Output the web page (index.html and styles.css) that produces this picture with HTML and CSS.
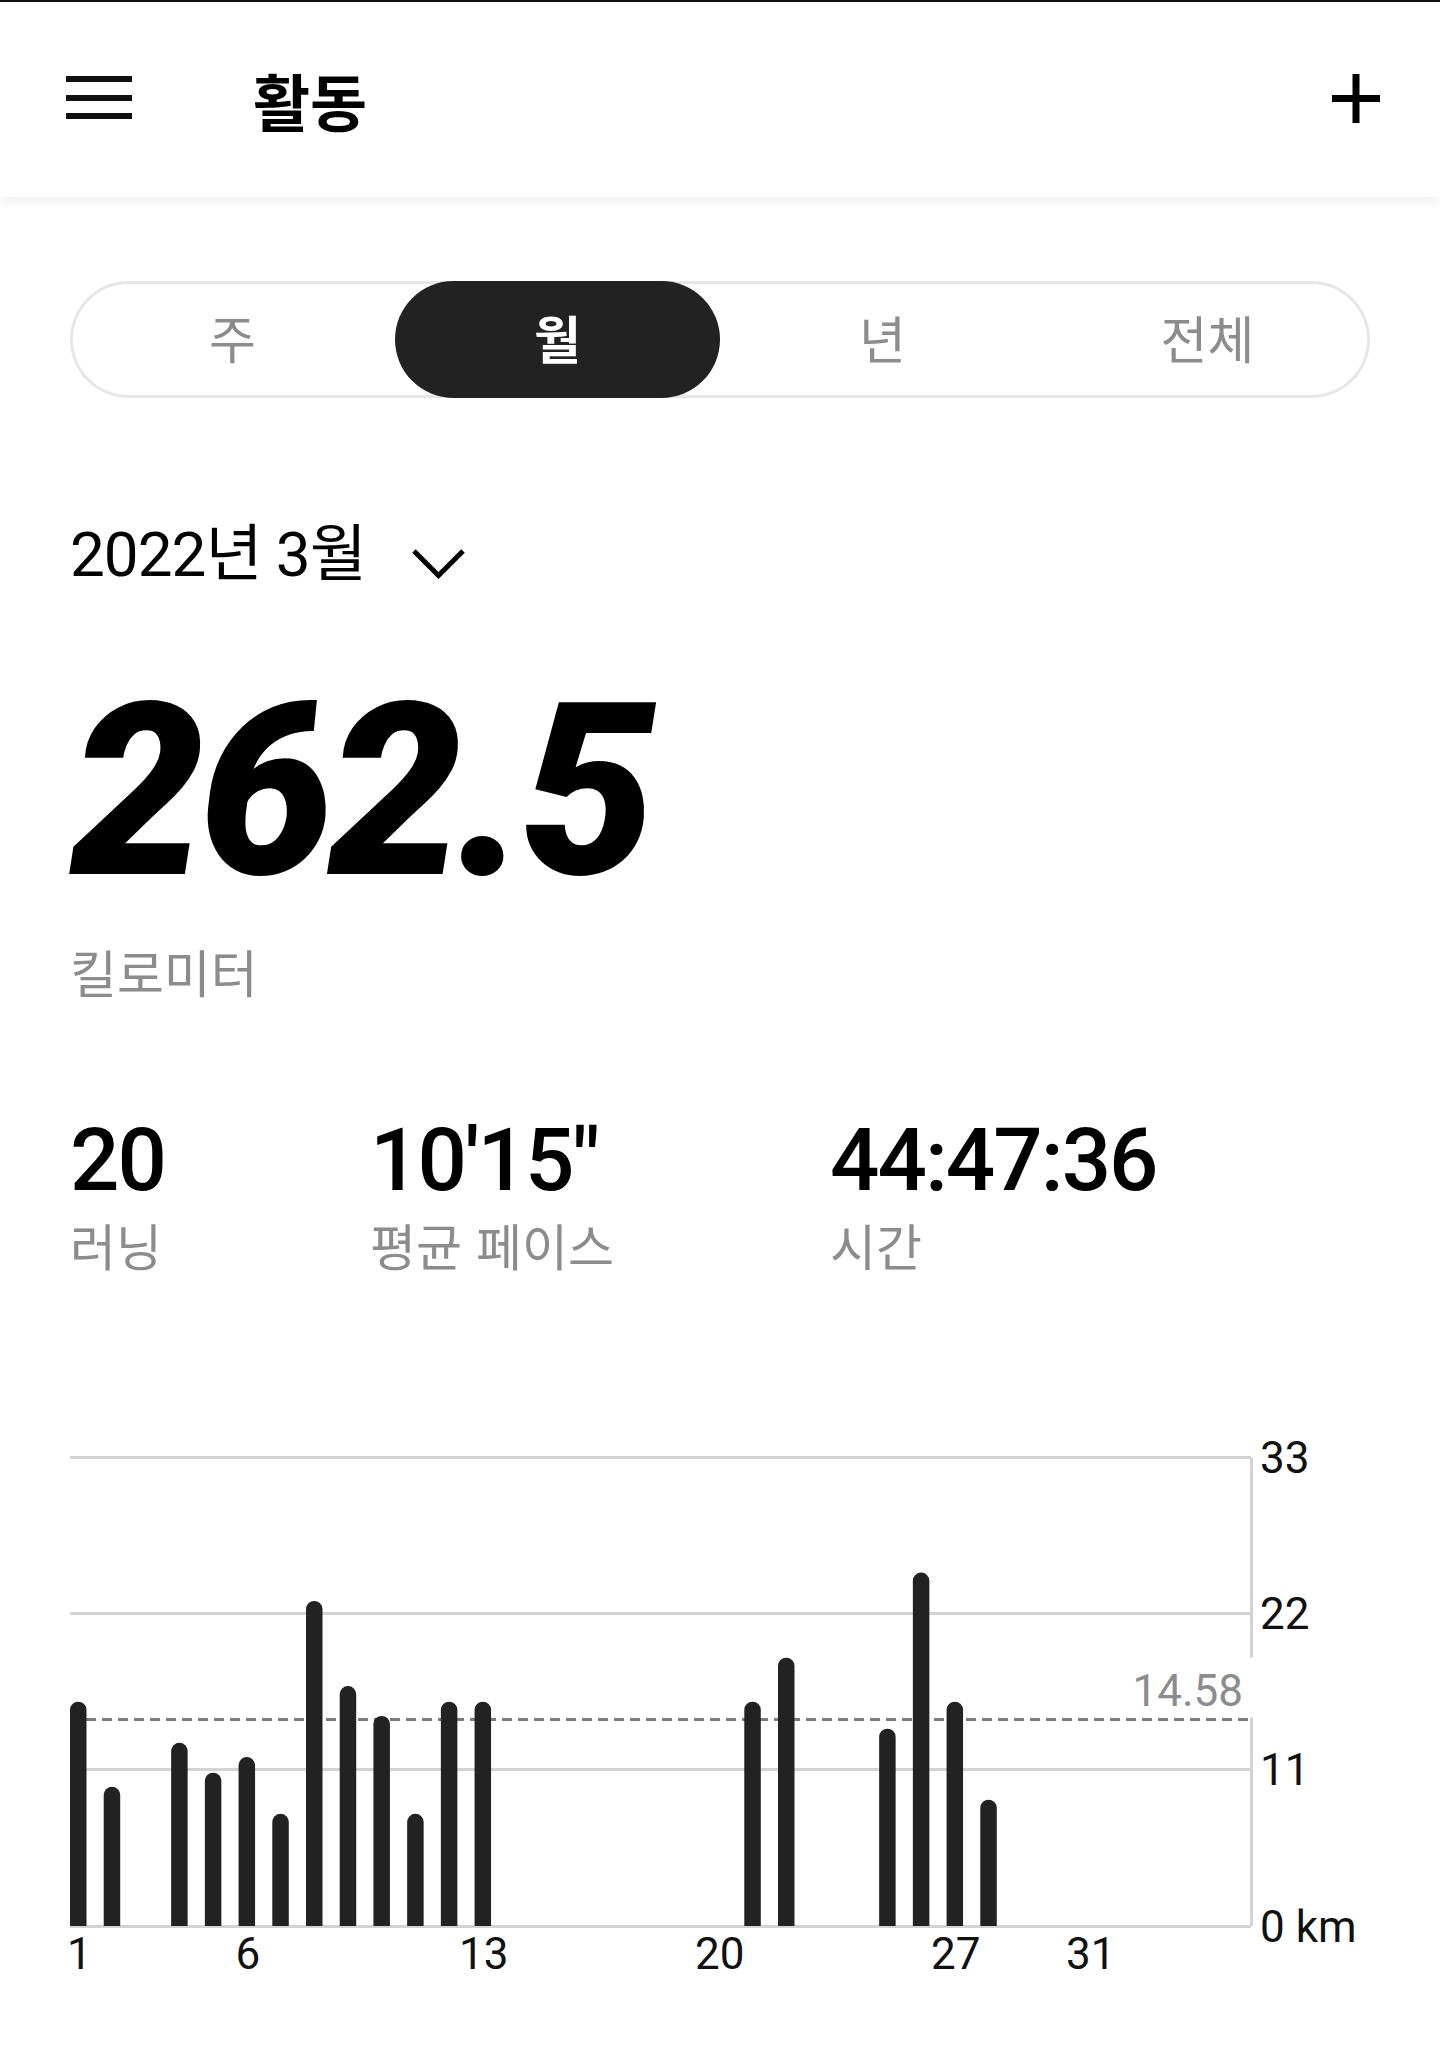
FILE: index.html
```html
<!DOCTYPE html>
<html lang="ko">
<head>
  <meta charset="UTF-8">
  <meta name="viewport" content="width=device-width, initial-scale=1.0">
  <title>활동</title>
  <link rel="stylesheet" href="styles.css">
</head>
<body>
  <header class="topbar">
    <button class="menu" type="button" aria-label="메뉴">
      <span></span><span></span><span></span>
    </button>
    <h1 class="title">활동</h1>
    <button class="add" type="button" aria-label="추가">
      <svg width="48" height="49" viewBox="0 0 48 49">
        <path d="M24 0V49M0 24.5H48" stroke="#000" stroke-width="7" fill="none"/>
      </svg>
    </button>
  </header>

  <main class="content">
    <div class="tabs">
      <div class="tab">주</div>
      <div class="tab active">월</div>
      <div class="tab">년</div>
      <div class="tab">전체</div>
    </div>

    <div class="period">
      <span>2022년 3월</span>
      <svg class="chevron" width="53" height="32" viewBox="0 0 53 32">
        <path d="M2 4L26.5 28.5L51 4" stroke="#000" stroke-width="5" fill="none"/>
      </svg>
    </div>

    <div class="total">262.5</div>
    <div class="unit">킬로미터</div>

    <div class="stats">
      <div class="stat">
        <div class="stat-value">20</div>
        <div class="stat-label">러닝</div>
      </div>
      <div class="stat">
        <div class="stat-value">10'15&quot;</div>
        <div class="stat-label">평균 페이스</div>
      </div>
      <div class="stat">
        <div class="stat-value">44:47:36</div>
        <div class="stat-label">시간</div>
      </div>
    </div>

    <!-- gráfico preenchido pelo script -->
    <div class="chart" id="chart"></div>
  </main>

  <script>
    // km por dia (março)
    const corridas = {
      1: 15.8, 2: 9.8, 4: 12.9, 5: 10.8, 6: 11.9, 7: 7.9, 8: 22.9, 9: 16.9,
      10: 14.8, 11: 7.9, 12: 15.8, 13: 15.8, 21: 15.8, 22: 18.9, 25: 13.9,
      26: 24.9, 27: 15.8, 28: 8.9
    };
    const media = 14.58;
    const diasMarcados = [1, 6, 13, 20, 27, 31];

    const W = 1181, TOP = 38.5, BASE = 507, MAX = 33;
    const SLOT = 1180 / 35, BAR = 16.5, R = BAR / 2;
    const y = km => BASE - km * (BASE - TOP) / MAX;
    const crisp = v => Math.round(v - 0.5) + 0.5;

    let svg = '';

    // linhas de grade e rótulos do eixo
    [33, 22, 11, 0].forEach(v => {
      const ly = crisp(y(v));
      svg += `<line class="grid" x1="0" x2="${W}" y1="${ly}" y2="${ly}"/>`;
      svg += `<text class="axis" x="1190" y="${ly + 15.5}">${v === 0 ? '0 km' : v}</text>`;
    });
    svg += `<line class="grid" x1="${W + 0.5}" x2="${W + 0.5}" y1="${TOP}" y2="${BASE}"/>`;

    // média
    const my = crisp(y(media));
    svg += `<line class="avg" x1="0" x2="${W + 2}" y1="${my}" y2="${my}"/>`;
    svg += `<rect x="1060" y="${my - 62}" width="125" height="60" fill="#fff"/>`;
    svg += `<text class="avg-label" x="1173" y="${my - 14}">${media}</text>`;

    // barras
    Object.entries(corridas).forEach(([dia, km]) => {
      const x = (dia - 1) * SLOT;
      const top = y(km);
      svg += `<path class="bar" d="M${x} ${BASE}V${top + R}A${R} ${R} 0 0 1 ${x + BAR} ${top + R}V${BASE}Z"/>`;
    });

    // dias
    diasMarcados.forEach(dia => {
      const cx = (dia - 1) * SLOT + R + 1;
      svg += `<text class="day" x="${cx}" y="550">${dia}</text>`;
    });

    document.getElementById('chart').innerHTML =
      `<svg width="1300" height="570" viewBox="0 0 1300 570">${svg}</svg>`;
  </script>
</body>
</html>
```

FILE: styles.css
```css
* {
  box-sizing: border-box;
}
body {
  margin: 0;
  font-family: Roboto, "Noto Sans CJK KR", sans-serif;
  color: #000;
  background: #fff;
}
.topbar {
  height: 197px;
  border-top: 2px solid #111;
  display: flex;
  align-items: center;
  padding: 0 60px 0 66px;
  box-shadow: 0 3px 12px rgba(0, 0, 0, 0.08);
  position: relative;
}
.menu {
  width: 66px;
  height: 43px;
  padding: 0;
  border: none;
  background: none;
  display: flex;
  flex-direction: column;
  justify-content: space-between;
  margin-top: -4px;
}
.menu span {
  display: block;
  height: 6px;
  background: #111;
}
.title {
  flex: 1;
  margin: 0 0 0 121px;
  font: 700 62px "Noto Sans CJK KR", sans-serif;
}
.add {
  width: 48px;
  height: 49px;
  padding: 0;
  border: none;
  background: none;
  margin-top: -2px;
}
.add svg {
  display: block;
}
.content {
  padding: 84px 70px 0;
}
.tabs {
  display: grid;
  grid-template-columns: repeat(4, 1fr);
  height: 117px;
  border-radius: 59px;
  box-shadow: inset 0 0 0 3px #e6e6e6;
}
.tab {
  display: flex;
  align-items: center;
  justify-content: center;
  padding-bottom: 6px;
  border-radius: 59px;
  font: 400 51px "Noto Sans CJK KR", sans-serif;
  color: #8c8c8c;
}
.tab.active {
  background: #222;
  color: #fff;
  font-weight: 700;
}
.period {
  display: flex;
  align-items: center;
  margin-top: 121px;
  font-size: 62px;
  line-height: 72px;
  letter-spacing: -1px;
}
.chevron {
  margin: 16px 0 0 46px;
}
.total {
  margin-top: 116px;
  font: italic 900 240px/170px Roboto, sans-serif;
  letter-spacing: -6px;
}
.unit {
  margin-top: 66px;
  font: 400 51px/56px "Noto Sans CJK KR", sans-serif;
  color: #8c8c8c;
}
.stats {
  display: grid;
  grid-template-columns: 300px 460px auto;
  margin-top: 118px;
}
.stat-value {
  font: 500 87px/87px Roboto, sans-serif;
  letter-spacing: -2px;
}
.stat-label {
  margin-top: 12px;
  font: 400 50px/56px "Noto Sans CJK KR", sans-serif;
  color: #8c8c8c;
}
.chart {
  margin-top: 147px;
}
.chart svg {
  display: block;
  overflow: visible;
}
.grid {
  stroke: #d3d3d3;
  stroke-width: 3;
}
.avg {
  stroke: #7c7c7c;
  stroke-width: 3;
  stroke-dasharray: 10 6;
}
.avg-label {
  font: 400 44px Roboto, sans-serif;
  fill: #8c8c8c;
  text-anchor: end;
}
.bar {
  fill: #222;
}
.axis {
  font: 400 44px Roboto, sans-serif;
  fill: #111;
}
.day {
  font: 400 44px Roboto, sans-serif;
  fill: #111;
  text-anchor: middle;
}
```
